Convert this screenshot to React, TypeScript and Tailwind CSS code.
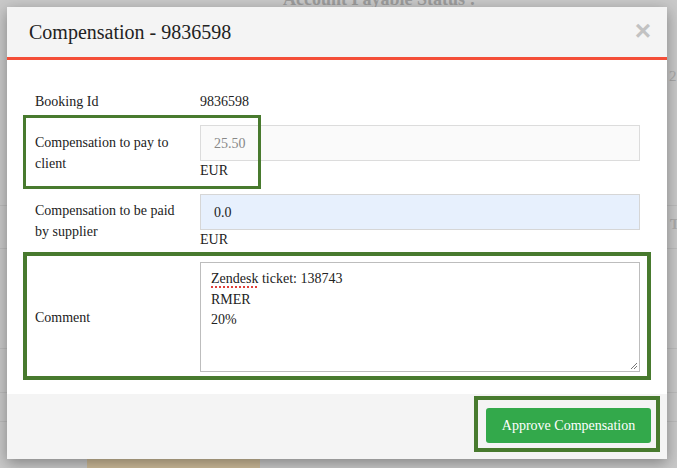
import React from "react";

function Grip() {
  return (
    <svg width="8" height="8" viewBox="0 0 8 8" className="absolute right-[1px] bottom-[1px]">
      <line x1="7" y1="1" x2="1" y2="7" stroke="#777" strokeWidth="1" />
      <line x1="7" y1="4" x2="4" y2="7" stroke="#777" strokeWidth="1" />
    </svg>
  );
}

export default function App() {
  return (
    <div className="relative w-[677px] h-[468px] overflow-hidden bg-[#c9c9c9] font-[family-name:Liberation_Serif,Times_New_Roman,serif]">
      {/* page behind the backdrop */}
      <div className="flex flex-col h-full">
        <div className="h-[8px] overflow-hidden">
          <p className="pl-[283px] -mt-[11px] text-[18px] font-bold text-[#9c9c9c] leading-[20px]">
            Account Payable Status :
          </p>
        </div>
        <div className="h-[60px]" />
        <p className="pl-[669px] text-[15px] text-[#a8a8a8] leading-[16px]">2</p>
        <div className="h-[121px]" />
        <div className="h-px bg-[#bcbcbc]" />
        <p className="pl-[670px] pt-[8px] h-[42px] text-[14px] font-bold text-[#ababab]">T</p>
        <div className="h-px bg-[#bcbcbc]" />
        <div className="h-[99px]" />
        <div className="h-px bg-[#bcbcbc]" />
        <div className="h-[43px]" />
        <div className="h-px bg-[#bcbcbc]" />
        <div className="h-[28px]" />
        <div className="h-px bg-[#bcbcbc]" />
        <div className="flex-1" />
        <div className="ml-[87px] w-[173px] h-[9px] bg-[#cdbb99]" />
      </div>

      {/* modal */}
      <div className="absolute left-[7px] top-[7px] w-[660px] h-[452px] bg-white shadow-[0_4px_14px_rgba(0,0,0,0.35)] flex flex-col">
        <div className="h-[53px] bg-[#f4f4f4] border-b-[3px] border-[#f44e38] flex items-center justify-between pl-[22px] pr-[16px]">
          <h4 className="text-[20px] text-[#222] leading-none">Compensation - 9836598</h4>
          <span className="font-[family-name:Liberation_Sans,Arial,sans-serif] font-bold text-[28px] leading-none text-[#c2c2c2] -mt-[2px]">
            ×
          </span>
        </div>

        <div className="pt-[32px] pl-[28px] pr-[27px] pb-[22px] grid grid-cols-[165px_1fr] text-[14px] text-[#222]">
          <div className="leading-[20px]">Booking Id</div>
          <div className="leading-[20px]">9836598</div>

          <div className="mt-[13px] pt-[7px] pr-[15px] leading-[21px]">Compensation to pay to client</div>
          <div className="mt-[13px]">
            <div className="h-[36px] border border-[#dcdcdc] bg-[#fafafa] px-[13px] flex items-center text-[#888]">
              25.50
            </div>
            <div className="leading-[20px]">EUR</div>
          </div>

          <div className="mt-[13px] pt-[6px] pr-[15px] leading-[21px]">Compensation to be paid by supplier</div>
          <div className="mt-[13px]">
            <div className="h-[36px] border border-[#d6d6d6] bg-[#e7f0fd] px-[13px] flex items-center">0.0</div>
            <div className="leading-[20px]">EUR</div>
          </div>

          <div className="mt-[12px] flex items-center">Comment</div>
          <div className="mt-[12px] relative h-[110px] border border-[#bdbdbd] px-[10px] pt-[6px] leading-[20.5px]">
            <div>
              <span className="underline decoration-dotted decoration-[#e0403a] decoration-[1.5px] underline-offset-[3px]">
                Zendesk
              </span>{" "}
              ticket: 138743
            </div>
            <div>RMER</div>
            <div>20%</div>
            <Grip />
          </div>
        </div>

        <div className="flex-1 bg-[#f4f4f4] flex justify-end items-start pt-[14px] pr-[16px]">
          <button className="w-[165px] h-[35px] rounded-[3px] bg-[#33a94b] text-white text-[14px]">
            Approve Compensation
          </button>
        </div>

        {/* highlight outlines */}
        <div className="absolute left-[16px] top-[108px] w-[238px] h-[74px] border-[3px] border-[#487a2e]" />
        <div className="absolute left-[16px] top-[245px] w-[628px] h-[128px] border-[4px] border-[#487a2e]" />
        <div className="absolute left-[467px] top-[389px] w-[186px] h-[56px] border-[4px] border-[#487a2e]" />
      </div>
    </div>
  );
}
